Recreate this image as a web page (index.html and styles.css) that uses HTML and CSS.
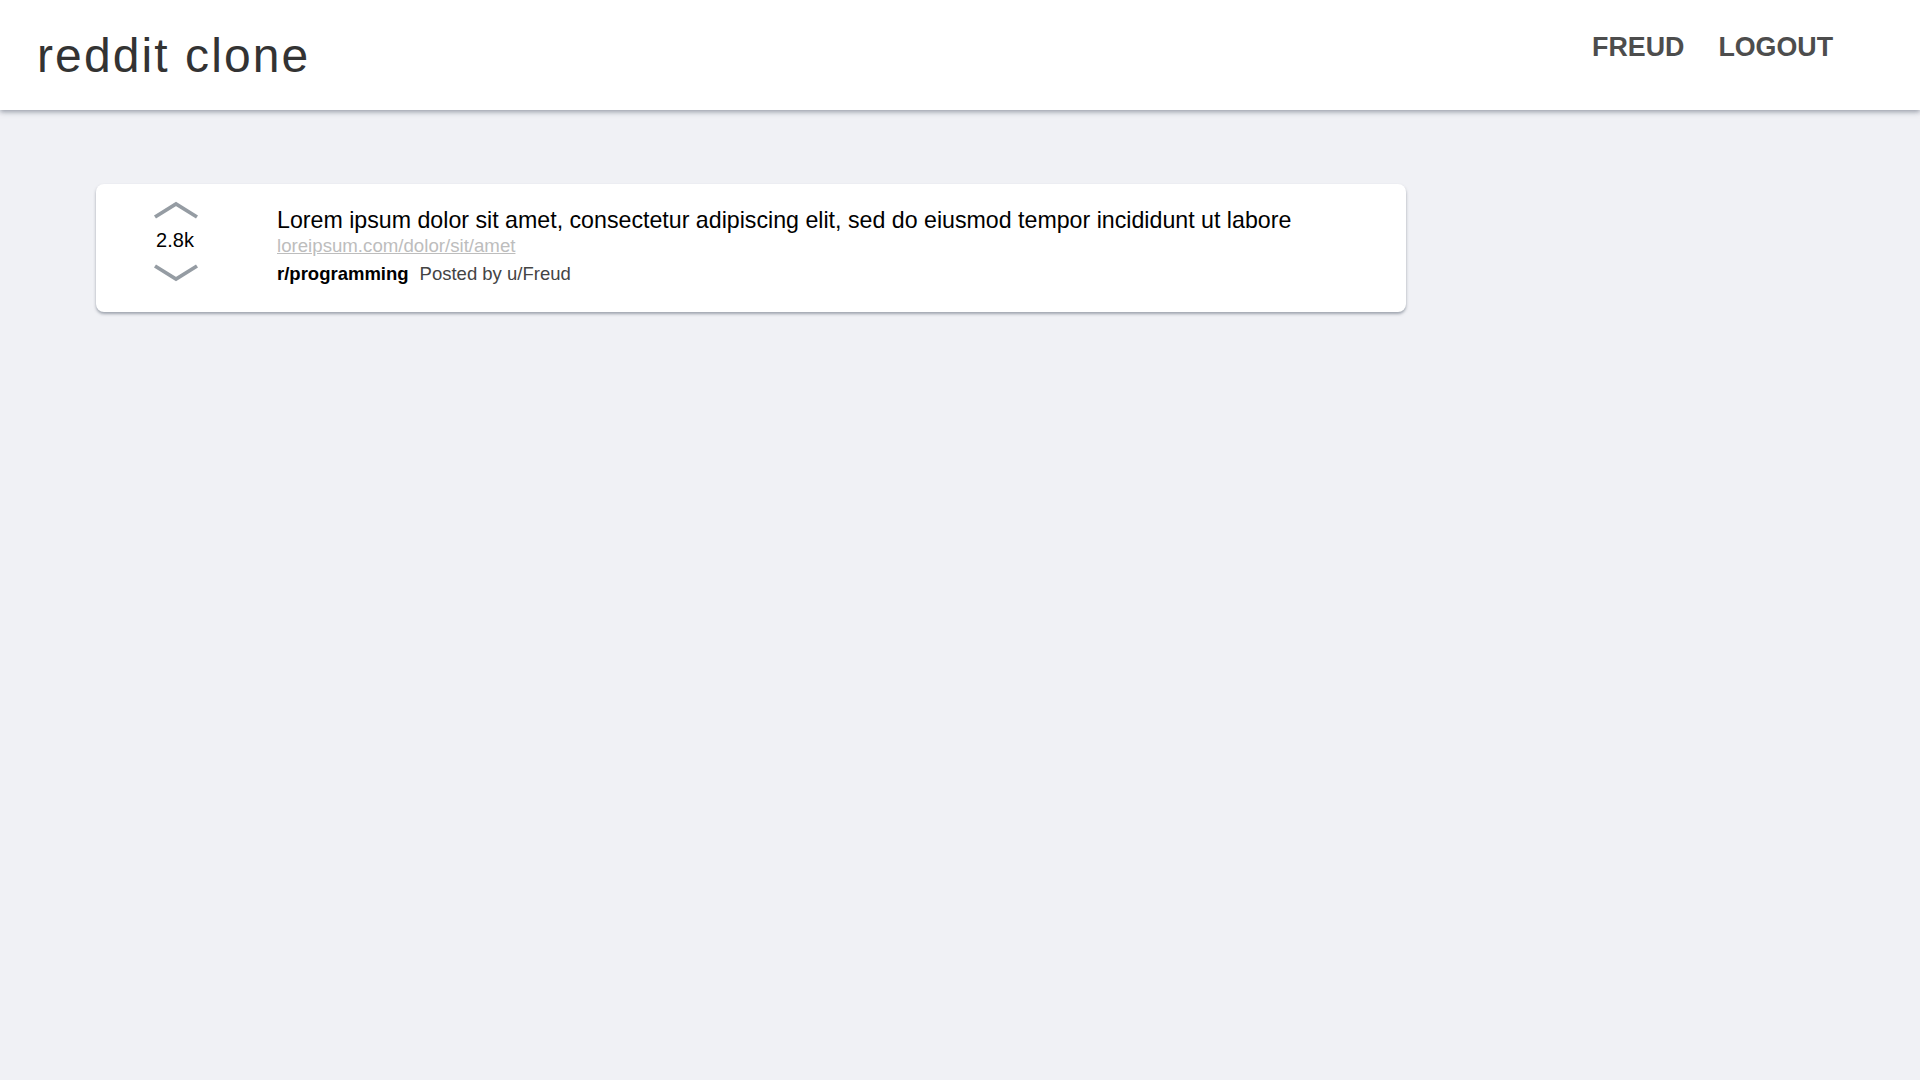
FILE: index.html
```html
<!DOCTYPE html>
<html>
<head>
<meta charset="utf-8">
<title>reddit clone</title>
<link rel="stylesheet" href="styles.css">
</head>
<body>
<header class="topbar">
  <div class="brand">reddit clone</div>
  <nav class="nav">
    <a class="nav-link" href="#">Freud</a>
    <a class="nav-link" href="#">Logout</a>
  </nav>
</header>
<main class="feed">
  <article class="post">
    <div class="vote">
      <svg class="chev chev-up" width="46" height="18" viewBox="0 0 46 18"><polyline points="2,16 23,3 44,16" fill="none" stroke="#959ca3" stroke-width="3.8"/></svg>
      <div class="score">2.8k</div>
      <svg class="chev chev-down" width="46" height="18" viewBox="0 0 46 18"><polyline points="2,2 23,15 44,2" fill="none" stroke="#959ca3" stroke-width="3.8"/></svg>
    </div>
    <div class="body">
      <div class="title">Lorem ipsum dolor sit amet, consectetur adipiscing elit, sed do eiusmod tempor incididunt ut labore</div>
      <a class="link" href="#">loreipsum.com/dolor/sit/amet</a>
      <div class="meta"><span class="sub">r/programming</span><span class="by">Posted by u/Freud</span></div>
    </div>
  </article>
</main>
</body>
</html>
```
FILE: styles.css
```css
html, body {
  margin: 0;
  padding: 0;
}
body {
  background: #f0f1f5;
  font-family: "Liberation Sans", Arial, sans-serif;
  min-height: 1080px;
}
.topbar {
  height: 110px;
  background: #ffffff;
  display: flex;
  justify-content: space-between;
  align-items: flex-start;
  box-shadow: 0 2px 5px rgba(80, 90, 105, 0.55);
  position: relative;
  z-index: 1;
}
.brand {
  margin: 32px 0 0 37px;
  font-size: 48px;
  line-height: 48px;
  letter-spacing: 2.1px;
  color: #333333;
}
.nav {
  display: flex;
  gap: 34px;
  margin: 34px 87px 0 0;
}
.nav-link {
  font-size: 26.8px;
  line-height: 26px;
  font-weight: bold;
  text-transform: uppercase;
  color: #4d4d4d;
  text-decoration: none;
}
.feed {
  padding: 74px 0 0 96px;
}
.post {
  width: 1310px;
  height: 128px;
  box-sizing: border-box;
  background: #ffffff;
  border-radius: 8px;
  box-shadow: 0 2px 3px rgba(80, 90, 105, 0.5);
  display: flex;
}
.vote {
  width: 160px;
  display: flex;
  flex-direction: column;
  align-items: center;
  padding-top: 17px;
}
.chev {
  display: block;
}
.score {
  font-size: 20px;
  line-height: 24px;
  color: #000000;
  margin: 9px 2px 12px 0;
}
.body {
  padding: 24px 0 0 21px;
  display: flex;
  flex-direction: column;
  align-items: flex-start;
}
.title {
  font-size: 23.2px;
  line-height: 24px;
  color: #000000;
}
.link {
  font-size: 18.67px;
  line-height: 24px;
  margin-top: 2px;
  color: #bdbdbd;
  text-decoration: underline;
}
.meta {
  margin-top: 4px;
  font-size: 18.5px;
  line-height: 24px;
  display: flex;
  gap: 11px;
}
.sub {
  font-weight: bold;
  color: #000000;
}
.by {
  color: #444444;
}
```
